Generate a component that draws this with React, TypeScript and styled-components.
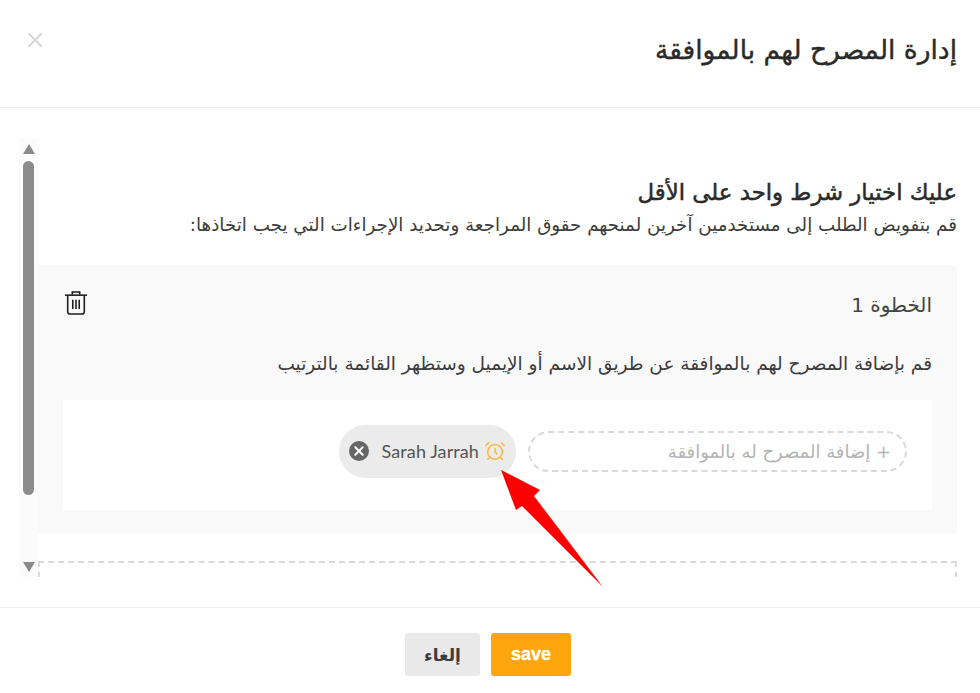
import styled, { createGlobalStyle } from 'styled-components'
import { X, AlarmClock } from 'lucide-react'

const GlobalStyle = createGlobalStyle`
  html, body {
    margin: 0;
    padding: 0;
    background: #ffffff;
    font-family: 'DejaVu Sans', sans-serif;
  }
  * {
    box-sizing: border-box;
  }
`

const TrashIcon = () => (
  <TrashSvg width={24} height={26} viewBox='0 0 26 28' fill='none' stroke='#1c1c1c' strokeWidth={1.7}>
    <path d='M1 5.5h24' />
    <path d='M9 5V2h8v3' />
    <path d='M4 6v17.5a2.5 2.5 0 0 0 2.5 2.5h13a2.5 2.5 0 0 0 2.5-2.5V6' />
    <path d='M9.5 10.5v10M13 10.5v10M16.5 10.5v10' />
  </TrashSvg>
)

const RemoveIcon = () => (
  <RemoveSvg width={20} height={20} viewBox='0 0 20 20'>
    <circle cx={10} cy={10} r={10} fill='#666666' />
    <path d='M6.3 6.3l7.4 7.4M13.7 6.3l-7.4 7.4' stroke='#ffffff' strokeWidth={2} strokeLinecap='round' />
  </RemoveSvg>
)

export default function App() {
  return (
    <Page>
      <GlobalStyle />
      <Header>
        <Title>إدارة المصرح لهم بالموافقة</Title>
        <CloseButton>
          <X size={24} strokeWidth={2} />
        </CloseButton>
      </Header>
      <Body>
        <ScrollArea>
          <Scrollbar>
            <ArrowUp />
            <Thumb />
            <ArrowDown />
          </Scrollbar>
          <Content>
            <Intro>
              <Heading>عليك اختيار شرط واحد على الأقل</Heading>
              <SubHeading>قم بتفويض الطلب إلى مستخدمين آخرين لمنحهم حقوق المراجعة وتحديد الإجراءات التي يجب اتخاذها:</SubHeading>
            </Intro>
            <StepPanel>
              <StepHeader>
                <StepTitle>الخطوة 1</StepTitle>
                <TrashIcon />
              </StepHeader>
              <StepText>قم بإضافة المصرح لهم بالموافقة عن طريق الاسم أو الإيميل وستظهر القائمة بالترتيب</StepText>
              <Approvers>
                <AddPill>+ إضافة المصرح له بالموافقة</AddPill>
                <Chip>
                  <AlarmClock size={22} strokeWidth={1.5} color='#fdb52e' />
                  <ChipName>Sarah Jarrah</ChipName>
                  <RemoveIcon />
                </Chip>
              </Approvers>
            </StepPanel>
            <NextStep />
          </Content>
        </ScrollArea>
      </Body>
      <Footer>
        <SaveButton>save</SaveButton>
        <CancelButton>إلغاء</CancelButton>
      </Footer>
      <Pointer width={980} height={693} viewBox='0 0 980 693'>
        <polygon points='501,470 540,490 534,496 603,587 522,506 516,510' fill='#ff0000' />
      </Pointer>
    </Page>
  )
}

const Page = styled.div`
  position: relative;
  width: 980px;
  height: 693px;
  display: flex;
  flex-direction: column;
  overflow: hidden;
  background: #ffffff;
`

const Header = styled.header`
  height: 108px;
  flex-shrink: 0;
  display: flex;
  align-items: flex-start;
  justify-content: space-between;
  padding: 28px 23px 0 23px;
  border-bottom: 1px solid #f0f0f0;
`

const Title = styled.h1`
  order: 2;
  margin: 0;
  direction: rtl;
  font-size: 26.5px;
  line-height: 44px;
  font-weight: 400;
  -webkit-text-stroke: 0.4px #2a2a2a;
  color: #2a2a2a;
`

const CloseButton = styled.div`
  order: 1;
  display: flex;
  color: #d4d6d8;
`

const Body = styled.main`
  height: 500px;
  flex-shrink: 0;
  padding: 30px 23px 0 19px;
  border-bottom: 1px solid #f0f0f0;
`

const ScrollArea = styled.div`
  display: flex;
  height: 439px;
`

const Scrollbar = styled.div`
  width: 19px;
  flex-shrink: 0;
  display: flex;
  flex-direction: column;
  align-items: center;
  padding: 6px 3px 5px;
  background: #fbfbfb;
`

const ArrowUp = styled.div`
  width: 0;
  height: 0;
  border-left: 6.5px solid transparent;
  border-right: 6.5px solid transparent;
  border-bottom: 10px solid #8a8a8a;
`

const ArrowDown = styled.div`
  width: 0;
  height: 0;
  margin-top: auto;
  border-left: 6.5px solid transparent;
  border-right: 6.5px solid transparent;
  border-top: 10px solid #8a8a8a;
`

const Thumb = styled.div`
  width: 11px;
  height: 334px;
  margin-top: 7px;
  border-radius: 6px;
  background: #8c8c8c;
`

const Content = styled.div`
  flex: 1;
  min-width: 0;
  overflow: hidden;
  direction: rtl;
`

const Intro = styled.div`
  padding-top: 38px;
  height: 127px;
`

const Heading = styled.h2`
  margin: 0;
  font-size: 22.8px;
  line-height: 32px;
  font-weight: 400;
  -webkit-text-stroke: 0.5px #2a2a2a;
  color: #2a2a2a;
`

const SubHeading = styled.p`
  margin: 3px 0 0;
  font-size: 18.3px;
  line-height: 28px;
  color: #3c3c3c;
`

const StepPanel = styled.section`
  height: 269px;
  padding: 24px 25px;
  background: #f9f9f9;
`

const StepHeader = styled.div`
  display: flex;
  align-items: flex-start;
  justify-content: space-between;
  height: 30px;
  padding-left: 1px;
`

const TrashSvg = styled.svg`
  margin-top: 1px;
`

const StepTitle = styled.div`
  font-size: 20px;
  line-height: 32px;
  color: #444444;
`

const StepText = styled.p`
  margin: 30px 0 21px;
  font-size: 18.5px;
  line-height: 30px;
  color: #3c3c3c;
`

const Approvers = styled.div`
  height: 110px;
  display: flex;
  align-items: center;
  gap: 12px;
  padding: 0 25px 8px;
  background: #ffffff;
`

const AddPill = styled.div`
  width: 379px;
  height: 41px;
  display: flex;
  align-items: center;
  padding: 0 14px;
  border: 2px dashed #d9d9d9;
  border-radius: 21px;
  font-size: 18px;
  color: #b4b4b4;
`

const Chip = styled.div`
  width: 177px;
  height: 53px;
  display: flex;
  align-items: center;
  gap: 5px;
  direction: rtl;
  padding: 0 10px;
  border-radius: 27px;
  background: #ebebeb;
`

const ChipName = styled.span`
  direction: ltr;
  font-family: 'Lato', sans-serif;
  font-size: 18px;
  letter-spacing: 0.1px;
  color: #555555;
`

const RemoveSvg = styled.svg`
  margin-right: auto;
`

const NextStep = styled.div`
  height: 60px;
  margin-top: 27px;
  border: 2px dashed #d9d9d9;
`

const Footer = styled.footer`
  flex: 1;
  display: flex;
  justify-content: center;
  align-items: flex-start;
  gap: 11px;
  padding: 25px 4px 0 0;
`

const SaveButton = styled.button`
  order: 2;
  width: 80px;
  height: 43px;
  border: 0;
  border-radius: 3px;
  background: #ffa50d;
  color: #ffffff;
  font-family: 'Liberation Sans', sans-serif;
  font-size: 18px;
  font-weight: 700;
  -webkit-text-stroke: 0.3px #ffffff;
`

const CancelButton = styled.button`
  order: 1;
  width: 75px;
  height: 43px;
  border: 0;
  border-radius: 3px;
  background: #e9e9e9;
  color: #3c3c3c;
  font-family: 'DejaVu Sans', sans-serif;
  font-size: 17px;
  font-weight: 700;
`

const Pointer = styled.svg`
  position: absolute;
  top: 0;
  left: 0;
  pointer-events: none;
`
